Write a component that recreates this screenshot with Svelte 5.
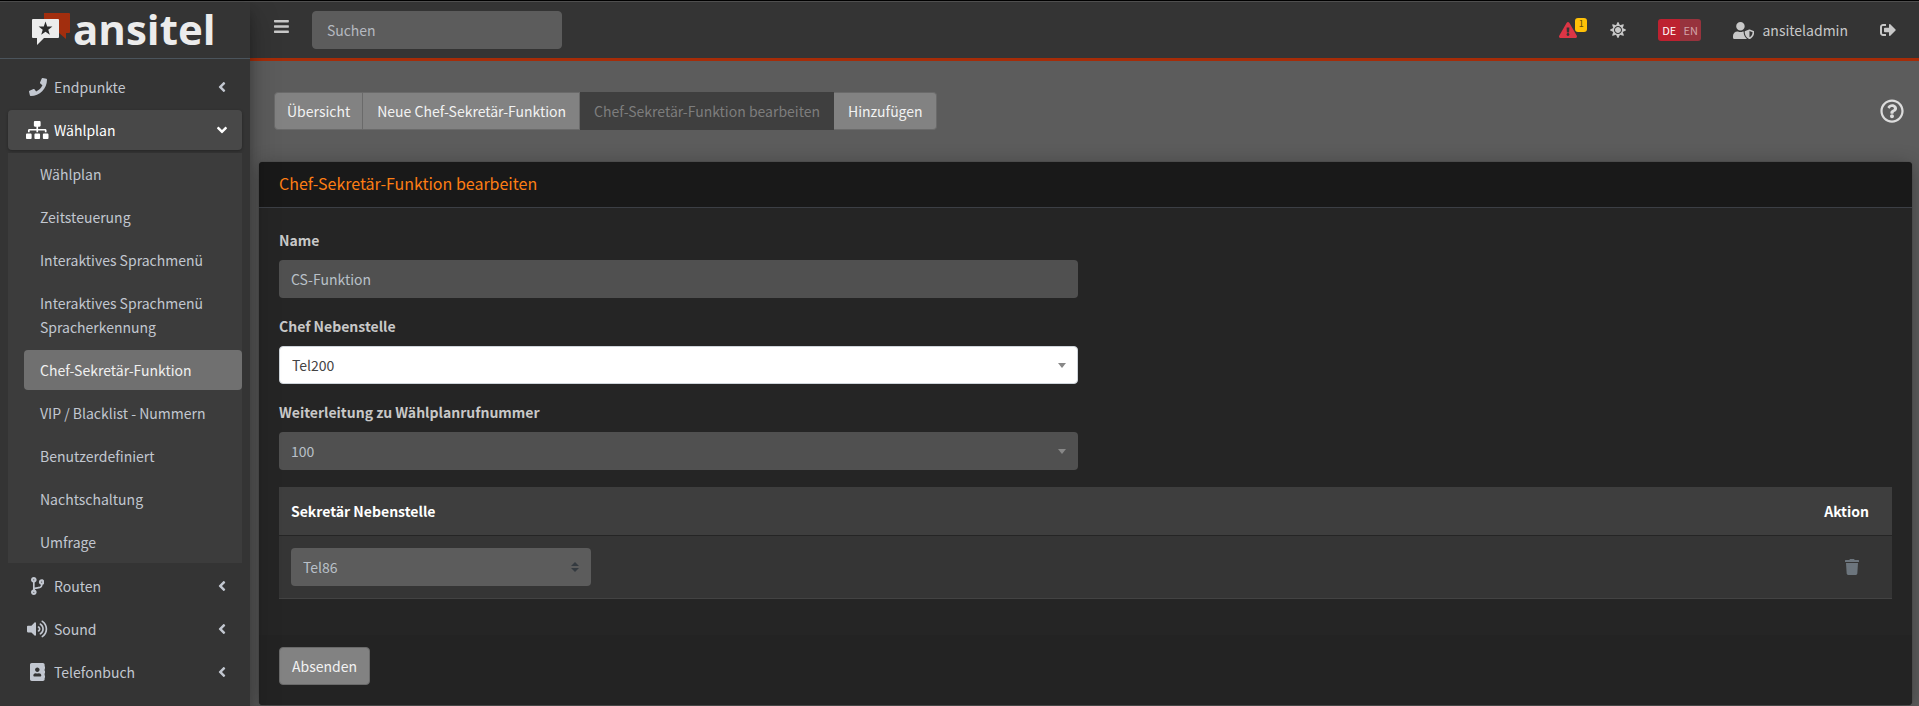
<script>
  const icons = {
    bars: [448, 'M16 132h416c8.8 0 16-7.2 16-16V76c0-8.8-7.2-16-16-16H16C7.2 60 0 67.2 0 76v40c0 8.8 7.2 16 16 16zm0 160h416c8.8 0 16-7.2 16-16v-40c0-8.8-7.2-16-16-16H16c-8.8 0-16 7.2-16 16v40c0 8.8 7.2 16 16 16zm0 160h416c8.8 0 16-7.2 16-16v-40c0-8.8-7.2-16-16-16H16c-8.8 0-16 7.2-16 16v40c0 8.8 7.2 16 16 16z'],
    phone: [512, 'M493.4 24.6l-104-24c-11.3-2.6-22.9 3.3-27.5 13.9l-48 112c-4.2 9.8-1.4 21.3 6.9 28l60.6 49.6c-36 76.7-98.9 140.5-177.2 177.2l-49.6-60.6c-6.8-8.3-18.2-11.1-28-6.9l-112 48C3.9 366.5-2 378.1.6 389.4l24 104C27.1 504.2 36.7 512 48 512c256.1 0 464-207.5 464-464 0-11.2-7.7-20.9-18.6-23.4z'],
    sitemap: [640, 'M128 352H32c-17.67 0-32 14.33-32 32v96c0 17.67 14.33 32 32 32h96c17.67 0 32-14.33 32-32v-96c0-17.67-14.33-32-32-32zm-24-80h192v48h48v-48h192v48h48v-57.59c0-21.17-17.23-38.41-38.41-38.41H344v-64h40c17.67 0 32-14.33 32-32V32c0-17.67-14.33-32-32-32H256c-17.67 0-32 14.33-32 32v96c0 17.67 14.33 32 32 32h40v64H94.41C73.23 224 56 241.23 56 262.41V320h48v-48zm264 80h-96c-17.67 0-32 14.33-32 32v96c0 17.67 14.33 32 32 32h96c17.67 0 32-14.33 32-32v-96c0-17.67-14.33-32-32-32zm240 0h-96c-17.67 0-32 14.33-32 32v96c0 17.67 14.33 32 32 32h96c17.67 0 32-14.33 32-32v-96c0-17.67-14.33-32-32-32z'],
    branch: [384, 'M384 144c0-44.2-35.8-80-80-80s-80 35.8-80 80c0 36.4 24.3 67.1 57.5 76.8-.6 16.1-4.2 28.5-11 36.9-15.4 19.2-49.3 22.4-85.2 25.7-28.2 2.6-57.4 5.4-81.3 16.9v-144c32.5-10.2 56-40.5 56-76.3 0-44.2-35.8-80-80-80S0 35.8 0 80c0 35.8 23.5 66.1 56 76.3v199.3C23.5 365.9 0 396.2 0 432c0 44.2 35.8 80 80 80s80-35.8 80-80c0-34-21.2-63.1-51.2-74.6 3.1-5.2 7.8-9.8 14.9-13.4 16.2-8.2 40.4-10.4 66.1-12.8 42.2-3.9 90-8.4 118.2-43.4 14-17.4 21.1-39.8 21.6-67.9 31.6-10.8 54.4-40.7 54.4-75.9zM80 64c8.8 0 16 7.2 16 16s-7.2 16-16 16-16-7.2-16-16 7.2-16 16-16zm0 384c-8.8 0-16-7.2-16-16s7.2-16 16-16 16 7.2 16 16-7.2 16-16 16zm224-320c8.8 0 16 7.2 16 16s-7.2 16-16 16-16-7.2-16-16 7.2-16 16-16z'],
    volume: [576, 'M215.03 71.05L126.06 160H24c-13.26 0-24 10.74-24 24v144c0 13.25 10.74 24 24 24h102.06l88.97 88.95c15.03 15.03 40.97 4.47 40.97-16.97V88.02c0-21.46-25.96-31.98-40.97-16.97zm233.32-51.08c-11.17-7.33-26.18-4.24-33.51 6.95-7.34 11.17-4.22 26.18 6.95 33.51 66.27 43.49 105.82 116.6 105.82 195.58 0 78.98-39.55 152.09-105.82 195.58-11.17 7.32-14.29 22.34-6.95 33.5 7.04 10.71 21.93 14.56 33.51 6.95C528.27 439.58 576 351.33 576 256S528.27 72.43 448.35 19.97zM480 256c0-63.53-32.06-121.94-85.77-156.24-11.19-7.14-26.03-3.82-33.12 7.46s-3.78 26.21 7.41 33.36C408.27 165.97 432 209.11 432 256s-23.73 90.02-63.48 115.42c-11.19 7.14-14.5 22.07-7.41 33.36 6.51 10.36 21.12 15.14 33.12 7.46C447.94 377.94 480 319.54 480 256zm-141.77-76.87c-11.58-6.33-26.19-2.16-32.61 9.45-6.39 11.61-2.16 26.2 9.45 32.61C327.98 228.28 336 241.63 336 256c0 14.38-8.02 27.72-20.92 34.81-11.61 6.41-15.84 21-9.45 32.61 6.43 11.66 21.05 15.8 32.61 9.45 28.23-15.55 45.77-45 45.77-76.88s-17.54-61.32-45.78-76.86z'],
    book: [448, 'M436 160c6.6 0 12-5.4 12-12v-40c0-6.6-5.4-12-12-12h-20V48c0-26.5-21.5-48-48-48H48C21.5 0 0 21.5 0 48v416c0 26.5 21.5 48 48 48h320c26.5 0 48-21.5 48-48v-48h20c6.6 0 12-5.4 12-12v-40c0-6.6-5.4-12-12-12h-20v-64h20c6.6 0 12-5.4 12-12v-40c0-6.6-5.4-12-12-12h-20v-64h20zm-228-32c35.3 0 64 28.7 64 64s-28.7 64-64 64-64-28.7-64-64 28.7-64 64-64zm112 236.8c0 10.6-10 19.2-22.4 19.2H118.4C106 384 96 375.4 96 364.8v-19.2c0-31.8 30.1-57.6 67.2-57.6h5c12.3 5.1 25.7 8 39.8 8s27.6-2.9 39.8-8h5c37.1 0 67.2 25.8 67.2 57.6v19.2z'],
    angle: [256, 'M31.7 239l136-136c9.4-9.4 24.6-9.4 33.9 0l22.6 22.6c9.4 9.4 9.4 24.6 0 33.9L127.9 256l96.4 96.4c9.4 9.4 9.4 24.6 0 33.9L201.7 409c-9.4 9.4-24.6 9.4-33.9 0l-136-136c-9.5-9.4-9.5-24.6-.1-34z'],
    warning: [576, 'M569.517 440.013C587.975 472.007 564.806 512 527.94 512H48.054c-36.937 0-59.999-40.055-41.577-71.987L246.423 23.985c18.467-32.009 64.72-31.951 83.154 0l239.94 416.028zM288 354c-25.405 0-46 20.595-46 46s20.595 46 46 46 46-20.595 46-46-20.595-46-46-46zm-43.673-165.346l7.418 136c.347 6.364 5.609 11.346 11.982 11.346h48.546c6.373 0 11.635-4.982 11.982-11.346l7.418-136c.375-6.874-5.098-12.654-11.982-12.654h-63.383c-6.884 0-12.356 5.78-11.981 12.654z'],
    sun: [512, 'M256 160c-52.9 0-96 43.1-96 96s43.1 96 96 96 96-43.1 96-96-43.1-96-96-96zm246.4 80.5l-94.7-47.3 33.5-100.4c4.5-13.6-8.4-26.5-21.9-21.9l-100.4 33.5-47.4-94.8c-6.4-12.8-24.6-12.8-31 0l-47.3 94.7L92.7 70.8c-13.6-4.5-26.5 8.4-21.9 21.9l33.5 100.4-94.7 47.4c-12.8 6.4-12.8 24.6 0 31l94.7 47.3-33.5 100.5c-4.5 13.6 8.4 26.5 21.9 21.9l100.4-33.5 47.3 94.7c6.4 12.8 24.6 12.8 31 0l47.3-94.7 100.4 33.5c13.6 4.5 26.5-8.4 21.9-21.9l-33.5-100.4 94.7-47.3c13-6.5 13-24.7.2-31.1zm-155.9 106c-49.9 49.9-131.1 49.9-181 0-49.9-49.9-49.9-131.1 0-181 49.9-49.9 131.1-49.9 181 0 49.9 49.9 49.9 131.1 0 181z'],
    user: [640, 'M622.3 271.1l-115.2-45c-4.1-1.6-12.6-3.7-22.2 0l-115.2 45c-10.7 4.2-17.7 14-17.7 24.9 0 111.6 68.7 188.8 132.9 213.9 9.6 3.7 18 1.6 22.2 0C558.4 489.9 640 420.5 640 296c0-10.9-7-20.7-17.7-24.9zM496 462.4V273.3l95.5 37.3c-5.6 87.1-60.9 135.4-95.5 151.8zM224 256c70.7 0 128-57.3 128-128S294.7 0 224 0 96 57.3 96 128s57.3 128 128 128zm96 40c0-2.5.8-4.8 1.1-7.2-2.5-.1-4.9-.8-7.5-.8h-16.7c-22.2 10.2-46.9 16-72.9 16s-50.6-5.8-72.9-16h-16.7C60.2 288 0 348.2 0 422.4V464c0 26.5 21.5 48 48 48h352c6.8 0 13.3-1.5 19.2-4-54-42.9-99.2-116.7-99.2-212z'],
    signout: [512, 'M497 273L329 441c-15 15-41 4.5-41-17v-96H152c-13.3 0-24-10.7-24-24v-96c0-13.3 10.7-24 24-24h136V88c0-21.4 25.9-32 41-17l168 168c9.3 9.4 9.3 24.6 0 34zM192 436v-40c0-6.6-5.4-12-12-12H96c-17.7 0-32-14.3-32-32V160c0-17.7 14.3-32 32-32h84c6.6 0 12-5.4 12-12V76c0-6.6-5.4-12-12-12H96c-53 0-96 43-96 96v192c0 53 43 96 96 96h84c6.6 0 12-5.4 12-12z'],
    question: [512, 'M256 8C119.043 8 8 119.083 8 256c0 136.997 111.043 248 248 248s248-111.003 248-248C504 119.083 392.957 8 256 8zm0 448c-110.532 0-200-89.431-200-200 0-110.495 89.472-200 200-200 110.491 0 200 89.471 200 200 0 110.53-89.431 200-200 200zm107.244-255.2c0 67.052-72.421 68.084-72.421 92.863V300c0 6.627-5.373 12-12 12h-45.647c-6.627 0-12-5.373-12-12v-8.659c0-35.745 27.1-50.034 47.579-61.516 17.561-9.845 28.324-16.541 28.324-29.579 0-17.246-21.999-28.693-39.784-28.693-23.189 0-33.894 10.977-48.942 29.969-4.057 5.12-11.46 6.071-16.666 2.124l-27.824-21.098c-5.107-3.872-6.251-11.066-2.644-16.363C184.846 131.491 214.94 112 261.794 112c49.071 0 101.45 38.304 101.45 88.8zM298 368c0 23.159-18.841 42-42 42s-42-18.841-42-42 18.841-42 42-42 42 18.841 42 42z'],
    trash: [448, 'M432 32H312l-9.4-18.7A24 24 0 0 0 281.1 0H166.8a23.72 23.72 0 0 0-21.4 13.3L136 32H16A16 16 0 0 0 0 48v32a16 16 0 0 0 16 16h416a16 16 0 0 0 16-16V48a16 16 0 0 0-16-16zM53.2 467a48 48 0 0 0 47.9 45h245.8a48 48 0 0 0 47.9-45L416 128H32z']
  };

  const menu = [
    { label: 'Endpunkte', icon: 'phone' },
    {
      label: 'Wählplan',
      icon: 'sitemap',
      open: true,
      children: [
        'Wählplan',
        'Zeitsteuerung',
        'Interaktives Sprachmenü',
        'Interaktives Sprachmenü Spracherkennung',
        'Chef-Sekretär-Funktion',
        'VIP / Blacklist - Nummern',
        'Benutzerdefiniert',
        'Nachtschaltung',
        'Umfrage'
      ]
    },
    { label: 'Routen', icon: 'branch' },
    { label: 'Sound', icon: 'volume' },
    { label: 'Telefonbuch', icon: 'book' }
  ];
  const current = 'Chef-Sekretär-Funktion';

  let name = $state('CS-Funktion');
</script>

{#snippet icon(key, size = 16)}
  <svg
    class="icon"
    viewBox="0 0 {icons[key][0]} 512"
    height={size}
    width={(icons[key][0] / 512) * size}
    aria-hidden="true"
  >
    <path d={icons[key][1]} fill="currentColor" />
  </svg>
{/snippet}

<div class="page">
  <aside class="sidebar">
    <a class="brand" href="#start">
      <svg width="39" height="33" viewBox="0 0 39 33" aria-hidden="true">
        <path d="M12 0H37a1 1 0 0 1 1 1V19a1 1 0 0 1-1 1H34V26L27 20H12z" fill="#a22e0e" />
        <path d="M1 6H26a1 1 0 0 1 1 1V24a1 1 0 0 1-1 1H12L5 32V25H1a1 1 0 0 1-1-1V7a1 1 0 0 1 1-1z" fill="#ececec" />
        <path d="M13.5 8.500l1.700 5 5.200.1-4.100 3.200 1.500 5-4.300-3-4.300 3 1.500-5-4.100-3.200 5.200-.1z" fill="#2b2b2b" />
      </svg>
      <span>ansitel</span>
    </a>
    <nav class="menu" aria-label="Hauptmenü">
      {#each menu as item}
        <a class="item" class:open={item.open} href="#menu">
          <span class="glyph">{@render icon(item.icon, 18)}</span>
          <span class="label">{item.label}</span>
          <span class="arrow">{@render icon('angle')}</span>
        </a>
        {#if item.children}
          <div class="submenu">
            {#each item.children as child}
              <a class="subitem" class:active={child === current} href="#sub">{child}</a>
            {/each}
          </div>
        {/if}
      {/each}
    </nav>
  </aside>

  <div class="content">
    <header class="topbar">
      <button class="plain burger" aria-label="Menü">{@render icon('bars', 17)}</button>
      <input class="search" type="search" placeholder="Suchen" aria-label="Suchen" />
      <div class="tools">
        <a class="alert" href="#warn" aria-label="Warnungen">
          {@render icon('warning')}<span class="badge">1</span>
        </a>
        <button class="plain" aria-label="Helligkeit">{@render icon('sun')}</button>
        <div class="lang">
          <button class="on">DE</button><button>EN</button>
        </div>
        <a class="account" href="#user">{@render icon('user', 17)}<span>ansiteladmin</span></a>
        <a href="#logout" aria-label="Abmelden">{@render icon('signout')}</a>
      </div>
    </header>

    <main>
      <div class="toolbar">
        <div class="tabs">
          <button>Übersicht</button>
          <button>Neue Chef-Sekretär-Funktion</button>
          <button disabled>Chef-Sekretär-Funktion bearbeiten</button>
          <button>Hinzufügen</button>
        </div>
        <button class="plain help" aria-label="Hilfe">{@render icon('question', 24)}</button>
      </div>

      <form class="card" onsubmit={(e) => e.preventDefault()}>
        <h1>Chef-Sekretär-Funktion bearbeiten</h1>
        <div class="body">
          <div class="fields">
            <div class="field">
              <label for="name">Name</label>
              <input id="name" type="text" bind:value={name} />
            </div>
            <div class="field">
              <label for="boss">Chef Nebenstelle</label>
              <div class="pick">
                <select id="boss" class="light"><option>Tel200</option></select>
                <svg class="caret" width="8" height="5" viewBox="0 0 8 5" aria-hidden="true"><path d="M0 0h8L4 5z" fill="#888" /></svg>
              </div>
            </div>
            <div class="field">
              <label for="forward">Weiterleitung zu Wählplanrufnummer</label>
              <div class="pick">
                <select id="forward"><option>100</option></select>
                <svg class="caret" width="8" height="5" viewBox="0 0 8 5" aria-hidden="true"><path d="M0 0h8L4 5z" fill="#888" /></svg>
              </div>
            </div>
          </div>
          <table>
            <thead>
              <tr><th>Sekretär Nebenstelle</th><th class="action">Aktion</th></tr>
            </thead>
            <tbody>
              <tr>
                <td>
                  <div class="pick small">
                    <select class="raised" aria-label="Sekretär Nebenstelle"><option>Tel86</option></select>
                    <svg class="caret" width="8" height="10" viewBox="0 0 4 5" aria-hidden="true"><path d="M2 0L0 2h4zm0 5L0 3h4z" fill="#343a40" /></svg>
                  </div>
                </td>
                <td class="action">
                  <button type="button" class="plain trash" aria-label="Löschen">{@render icon('trash')}</button>
                </td>
              </tr>
            </tbody>
          </table>
        </div>
        <div class="footer"><button class="submit">Absenden</button></div>
      </form>
    </main>
  </div>
</div>

<style>
  :global(body) {
    background: #5c5c5c;
    border-top: 1px solid #000;
  }
  .page, .page * {
    box-sizing: border-box;
  }
  .page {
    display: flex;
    min-height: calc(100vh - 1px);
    border-top: 1px solid #4f4f4f;
    font: 14px/24px 'Noto Sans CJK SC', 'Noto Sans', sans-serif;
    color: #c8c8c8;
  }
  a {
    color: inherit;
    text-decoration: none;
  }
  button, input, select {
    font: inherit;
    color: inherit;
    margin: 0;
  }
  .icon, .caret {
    display: block;
    flex: none;
  }
  .plain {
    display: block;
    padding: 0;
    border: 0;
    background: none;
  }

  .sidebar {
    flex: none;
    width: 250px;
    background: #343434;
    color: #c2c7d0;
    box-shadow: 0 14px 28px rgba(0, 0, 0, 0.25), 0 10px 10px rgba(0, 0, 0, 0.22);
    z-index: 2;
  }
  .brand {
    display: flex;
    align-items: center;
    gap: 2px;
    height: 57px;
    padding: 0 0 2px 32px;
    border-bottom: 1px solid #4b545c;
    color: #ececec;
    font: 700 42px/48px 'Open Sans', sans-serif;
  }
  .menu {
    display: flex;
    flex-direction: column;
    gap: 3px;
    padding: 8px;
  }
  .item {
    display: flex;
    align-items: center;
    height: 40px;
    padding: 0 16px;
    border-radius: 4px;
  }
  .open {
    background: #484848;
    color: #fff;
    box-shadow: 0 1px 3px rgba(0, 0, 0, 0.3);
  }
  .glyph {
    display: flex;
    justify-content: center;
    width: 27px;
    margin-right: 3px;
  }
  .label {
    flex: 1;
  }
  .open .arrow {
    transform: rotate(-90deg);
  }
  .submenu {
    display: flex;
    flex-direction: column;
    gap: 3px;
    padding: 1px 0 1px 16px;
    background: #3c3c3c;
  }
  .subitem {
    padding: 8px 16px;
    border-radius: 4px;
  }
  .active {
    background: #707070;
    color: #f0f0f0;
  }

  .content {
    flex: 1;
    min-width: 0;
  }
  .topbar {
    display: flex;
    align-items: center;
    height: 59px;
    padding: 0 23px 0 24px;
    border-bottom: 3px solid #a62c08;
    background: #343434;
  }
  .burger {
    padding-bottom: 8px;
  }
  .search {
    width: 250px;
    height: 38px;
    margin-left: 23px;
    padding: 0 14px;
    border: 1px solid #5c5c5c;
    border-radius: 4px;
    background: #5c5c5c;
  }
  .search::placeholder {
    color: #b5b9c0;
    opacity: 1;
  }
  .tools {
    display: flex;
    align-items: center;
    gap: 32px;
    margin-left: auto;
  }
  .alert {
    display: flex;
    color: #dc3545;
  }
  .badge {
    width: 12px;
    height: 14px;
    margin: -4px -9px 0 -2px;
    border-radius: 3px;
    background: #ffc107;
    color: #5f4a0c;
    font-size: 9px;
    line-height: 12px;
    text-align: center;
  }
  .lang {
    display: flex;
    overflow: hidden;
    border-radius: 3px;
  }
  .lang button {
    width: 21px;
    height: 22px;
    padding: 0;
    border: 0;
    background: #97333d;
    color: #d3a5a9;
    font-size: 11px;
    line-height: 22px;
  }
  .lang .on {
    width: 22px;
    background: #bd2130;
    color: #fff;
  }
  .account {
    display: flex;
    align-items: center;
    gap: 8px;
  }

  .toolbar {
    display: flex;
    align-items: center;
    justify-content: space-between;
    padding: 31px 15px 32px 24px;
  }
  .tabs {
    display: flex;
  }
  .tabs button, .submit {
    height: 38px;
    padding: 0 13px;
    border: 1px solid #6a6a6a;
    background: #828282;
    color: #f2f2f2;
  }
  .tabs button + button {
    border-left: 0;
    padding-left: 14px;
  }
  .tabs button:first-child {
    padding: 0 12px;
    border-radius: 4px 0 0 4px;
  }
  .tabs button:last-child {
    border-radius: 0 4px 4px 0;
  }
  .tabs button:disabled {
    border-color: #3f3f3f;
    background: #3f3f3f;
    color: #7d7d7d;
  }
  .help {
    color: #dcdcdc;
  }

  .card {
    margin: 0 7px 1px 9px;
    border-radius: 4px;
    background: #252525;
    box-shadow: 0 0 1px rgba(0, 0, 0, 0.6), 0 3px 20px rgba(0, 0, 0, 0.3);
    overflow: hidden;
  }
  h1 {
    margin: 0;
    padding: 9px 20px 12px;
    border-bottom: 1px solid #3c3f45;
    background: #191919;
    color: #fd7e14;
    font-size: 16px;
    line-height: 24px;
    font-weight: 400;
  }
  .body {
    padding: 20px 20px 36px;
  }
  .fields {
    display: grid;
    grid-template-columns: 1fr 1fr;
    column-gap: 15px;
    row-gap: 16px;
    margin-bottom: 17px;
  }
  .field {
    grid-column: 1;
  }
  label {
    display: block;
    margin-bottom: 8px;
    font-weight: 700;
  }
  .field input, select {
    display: block;
    width: 100%;
    height: 38px;
    padding: 0 12px;
    border: 0;
    border-radius: 4px;
    background: #505050;
    color: #b9c0c8;
    appearance: none;
  }
  .field select.light {
    border: 1px solid #ced4da;
    background: #fff;
    color: #444;
  }
  select.raised {
    background: #5c5c5c;
  }
  .pick {
    display: grid;
    align-items: center;
  }
  .pick > :global(*) {
    grid-area: 1 / 1;
  }
  .caret {
    justify-self: end;
    margin-right: 12px;
    pointer-events: none;
  }
  .small {
    width: 300px;
  }
  table {
    width: 100%;
    border-collapse: collapse;
    background: #353535;
  }
  th {
    padding: 12px;
    border-bottom: 1px solid #252525;
    background: #3e3e3e;
    color: #fff;
    text-align: left;
    font-weight: 700;
  }
  td {
    padding: 12px;
    border-bottom: 1px solid #434343;
  }
  th.action {
    padding-right: 23px;
    text-align: right;
  }
  .trash {
    margin-left: auto;
    padding: 0 21px;
    color: #6c757d;
  }
  .footer {
    padding: 12px 20px 20px;
    background: #232323;
  }
  .submit {
    padding: 0 12px;
    border-radius: 4px;
  }
</style>
